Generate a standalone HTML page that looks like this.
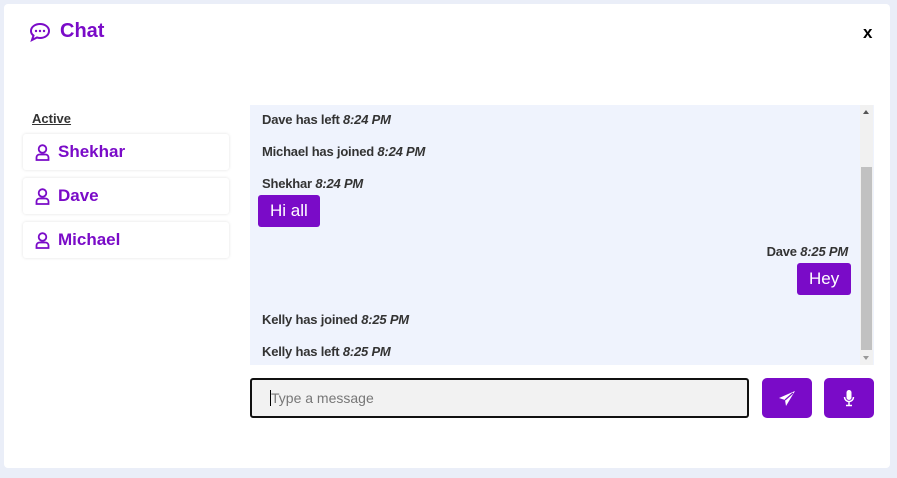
<!DOCTYPE html>
<html><head><style>
body{margin:0;width:897px;height:478px;background:#eaeef8;font-family:"Liberation Sans",sans-serif;position:relative;overflow:hidden}
.card{position:absolute;left:4px;top:4px;width:886px;height:464px;background:#fff;border-radius:4px}
.a{position:absolute}
.title{left:60px;top:20px;font-size:20px;font-weight:bold;color:#7a0bc8}
.x{left:863px;top:23px;font-size:17px;font-weight:bold;color:#000}
.act{left:32px;top:111px;font-size:13px;color:#333;text-decoration:underline;font-weight:bold}
.u{left:23px;width:206px;height:36px;box-shadow:0 0 3px rgba(0,0,0,.12);border-radius:3px;color:#7a0bc8;font-weight:bold;font-size:17px;line-height:36px}
.u svg{position:absolute;left:12px;top:10px}
.u span{position:absolute;left:35px}
.chat{left:250px;top:105px;width:624px;height:260px;background:#eff3fd}
.m{font-size:13px;font-weight:bold;color:#333;position:absolute;letter-spacing:-0.2px}
.m i{font-weight:bold}
.b{position:absolute;background:#7a0bc8;color:#fff;font-size:17px;border-radius:3px;height:32px;line-height:32px;padding:0 12px}
.sb{left:860px;top:105px;width:13px;height:260px;background:#f1f1f1}
.th{left:861px;top:167px;width:11px;height:183px;background:#c1c1c1}
.in{left:250px;top:378px;height:36px;border:2px solid #111;border-radius:3px;background:#f2f2f2;font-size:14px;color:#777;line-height:36px;padding-left:19px;width:476px}
.btn{top:378px;width:50px;height:40px;background:#7a0bc8;border-radius:5px}
</style></head><body>
<div class="card"></div>
<svg class="a" style="left:29px;top:22px" width="22" height="20" viewBox="0 0 22 20"><path d="M11 2C6 2 2 5 2 9c0 2 1 3.5 2.5 4.5L3 18l5-2.5c1 .3 2 .5 3 .5 5 0 9-3 9-7s-4-7-9-7z" fill="none" stroke="#7a0bc8" stroke-width="2"/><circle cx="7" cy="9" r="1.2" fill="#7a0bc8"/><circle cx="11" cy="9" r="1.2" fill="#7a0bc8"/><circle cx="15" cy="9" r="1.2" fill="#7a0bc8"/></svg>
<div class="a title">Chat</div>
<div class="a x">x</div>
<div class="a act">Active</div>
<div class="a u" style="top:134px"><svg width="15" height="17" viewBox="0 0 15 17"><circle cx="7.5" cy="5" r="3.8" fill="none" stroke="#7a0bc8" stroke-width="1.8"/><path d="M1.5 16v-2.5a3 3 0 0 1 3-3h6a3 3 0 0 1 3 3V16z" fill="none" stroke="#7a0bc8" stroke-width="1.8"/></svg><span>Shekhar</span></div>
<div class="a u" style="top:178px"><svg width="15" height="17" viewBox="0 0 15 17"><circle cx="7.5" cy="5" r="3.8" fill="none" stroke="#7a0bc8" stroke-width="1.8"/><path d="M1.5 16v-2.5a3 3 0 0 1 3-3h6a3 3 0 0 1 3 3V16z" fill="none" stroke="#7a0bc8" stroke-width="1.8"/></svg><span>Dave</span></div>
<div class="a u" style="top:222px"><svg width="15" height="17" viewBox="0 0 15 17"><circle cx="7.5" cy="5" r="3.8" fill="none" stroke="#7a0bc8" stroke-width="1.8"/><path d="M1.5 16v-2.5a3 3 0 0 1 3-3h6a3 3 0 0 1 3 3V16z" fill="none" stroke="#7a0bc8" stroke-width="1.8"/></svg><span>Michael</span></div>
<div class="a chat"></div>
<div class="m" style="left:262px;top:112px">Dave has left <i>8:24 PM</i></div>
<div class="m" style="left:262px;top:144px">Michael has joined <i>8:24 PM</i></div>
<div class="m" style="left:262px;top:176px">Shekhar <i>8:24 PM</i></div>
<div class="b" style="left:258px;top:195px">Hi all</div>
<div class="m" style="right:49px;top:244px">Dave <i>8:25 PM</i></div>
<div class="b" style="left:797px;top:263px">Hey</div>
<div class="m" style="left:262px;top:312px">Kelly has joined <i>8:25 PM</i></div>
<div class="m" style="left:262px;top:344px">Kelly has left <i>8:25 PM</i></div>
<div class="a sb"></div><div class="a th"></div>
<div class="a" style="left:863px;top:110px;width:0;height:0;border:3.5px solid transparent;border-bottom:4px solid #555;border-top:0"></div>
<div class="a" style="left:863px;top:356px;width:0;height:0;border:3.5px solid transparent;border-top:4px solid #999;border-bottom:0"></div>
<div class="a in">Type a message</div>
<div class="a" style="left:270px;top:390px;width:1px;height:16px;background:#000"></div>
<div class="a btn" style="left:762px"><svg style="position:absolute;left:16px;top:12px" width="18" height="17" viewBox="0 0 18 17"><path d="M17 1L1 8l6 2 1 6 9-15z" fill="#fff"/><path d="M7 10l8-7" stroke="#7a0bc8" stroke-width="1.2"/></svg></div>
<div class="a btn" style="left:824px"><svg style="position:absolute;left:19px;top:11px" width="12" height="18" viewBox="0 0 12 18"><rect x="3.5" y="1" width="5" height="10" rx="2.5" fill="#fff"/><path d="M1.5 8a4.5 4.5 0 0 0 9 0M6 12.5V16M3 16.5h6" stroke="#fff" stroke-width="1.5" fill="none"/></svg></div>
</body></html>
